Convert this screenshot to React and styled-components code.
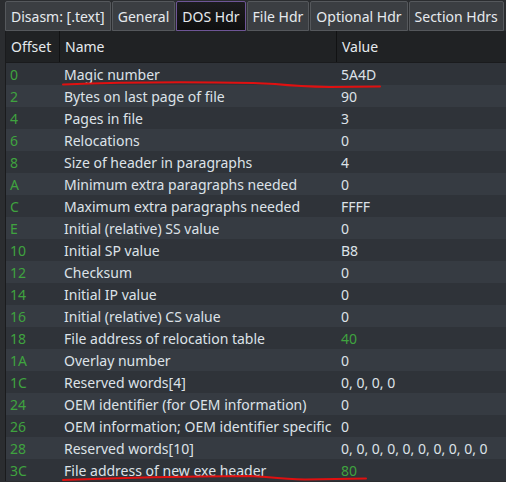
import React from 'react';
import styled, { createGlobalStyle } from 'styled-components';

const GlobalStyle = createGlobalStyle`
  html, body {
    margin: 0;
    padding: 0;
    background: #2b2d30;
    overflow: hidden;
  }
  * { box-sizing: border-box; }
`;

const Window = styled.div`
  position: relative;
  width: 506px;
  height: 482px;
  overflow: hidden;
  background: #2b2d30;
  font-family: "Noto Sans", "Open Sans", sans-serif;
  color: #dfe3e8;
`;

const TabBar = styled.div`
  display: flex;
  gap: 1px;
  height: 31px;
  padding: 1px 0 0 5px;
  background: #2b2d30;
`;

const Tab = styled.div`
  height: 30px;
  padding: 0 5px;
  display: flex;
  align-items: center;
  font-size: 14px;
  white-space: nowrap;
  border-radius: 2px 2px 0 0;
  border: 1px solid ${p => (p.$active ? '#6e5596' : '#55585c')};
  background: ${p => (p.$active ? 'linear-gradient(#1c1c1e, #0f0f10)' : '#3b3e42')};
  color: #e6eaee;
`;

const Pane = styled.div`
  margin-left: 5px;
  border-left: 1px solid #1a1b1d;
  background: #2f3338;
`;

const Columns = styled.div`
  display: grid;
  grid-template-columns: 53px 277px 1fr;
`;

const HeaderRow = styled(Columns)`
  height: 32px;
  background: #202224;
  border-bottom: 1px solid #1a1b1d;
`;

const HeaderCell = styled.div`
  display: flex;
  align-items: center;
  padding-left: 5px;
  font-size: 14px;
  color: #e6eaee;
  border-left: ${p => (p.$first ? 'none' : '1px solid #111213')};
`;

const Row = styled(Columns)`
  height: 22px;
  background: ${p => (p.$odd ? '#363b42' : '#2f3339')};
`;

const Cell = styled.div`
  display: flex;
  align-items: center;
  padding-left: ${p => p.$pad}px;
  font-size: 14px;
  white-space: nowrap;
  overflow: hidden;
  color: ${p => (p.$green ? '#3fa33f' : '#dde2e8')};
`;

const Marks = styled.svg`
  position: absolute;
  left: 0;
  top: 0;
  pointer-events: none;
`;

const tabs = ['Disasm: [.text]', 'General', 'DOS Hdr', 'File Hdr', 'Optional Hdr', 'Section Hdrs'];

const rows = [
  ['0', 'Magic number', '5A4D'],
  ['2', 'Bytes on last page of file', '90'],
  ['4', 'Pages in file', '3'],
  ['6', 'Relocations', '0'],
  ['8', 'Size of header in paragraphs', '4'],
  ['A', 'Minimum extra paragraphs needed', '0'],
  ['C', 'Maximum extra paragraphs needed', 'FFFF'],
  ['E', 'Initial (relative) SS value', '0'],
  ['10', 'Initial SP value', 'B8'],
  ['12', 'Checksum', '0'],
  ['14', 'Initial IP value', '0'],
  ['16', 'Initial (relative) CS value', '0'],
  ['18', 'File address of relocation table', '40', true],
  ['1A', 'Overlay number', '0'],
  ['1C', 'Reserved words[4]', '0, 0, 0, 0'],
  ['24', 'OEM identifier (for OEM information)', '0'],
  ['26', 'OEM information; OEM identifier specific', '0'],
  ['28', 'Reserved words[10]', '0, 0, 0, 0, 0, 0, 0, 0, 0, 0'],
  ['3C', 'File address of new exe header', '80', true],
];

export default function App() {
  return (
    <Window>
      <GlobalStyle />
      <TabBar>
        {tabs.map(t => (
          <Tab key={t} $active={t === 'DOS Hdr'}>{t}</Tab>
        ))}
      </TabBar>
      <Pane>
        <HeaderRow>
          <HeaderCell $first>Offset</HeaderCell>
          <HeaderCell>Name</HeaderCell>
          <HeaderCell>Value</HeaderCell>
        </HeaderRow>
        {rows.map(([off, name, value, greenValue], i) => (
          <Row key={off} $odd={i % 2 === 1}>
            <Cell $pad={4} $green>{off}</Cell>
            <Cell $pad={5}>{name}</Cell>
            <Cell $pad={5} $green={greenValue}>{value}</Cell>
          </Row>
        ))}
      </Pane>
      <Marks width="506" height="482" viewBox="0 0 506 482">
        <path d="M63 84.5 Q150 81 253 83 L275 84 Q300 86.5 330 87 L380 86.5" fill="none" stroke="#e01010" strokeWidth="2" strokeLinecap="round" />
        <path d="M63 480 Q150 476.5 250 476 L266 477 Q290 479 305 479.5 L366 478.5" fill="none" stroke="#e01010" strokeWidth="2" strokeLinecap="round" />
      </Marks>
    </Window>
  );
}
